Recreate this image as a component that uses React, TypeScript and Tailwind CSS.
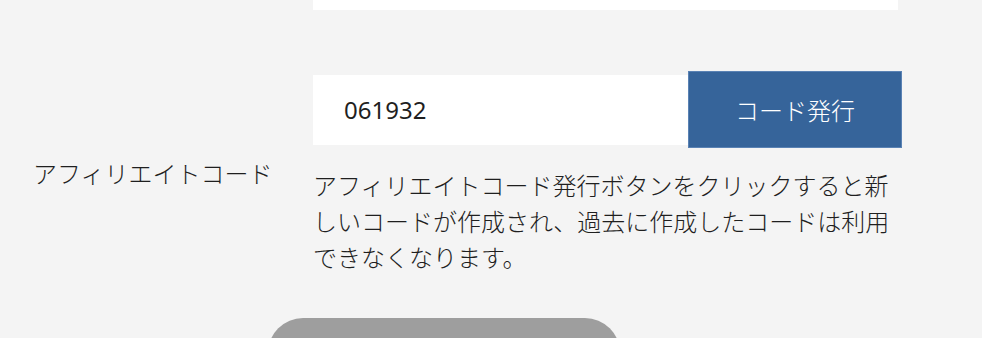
export default function App() {
  return (
    <div
      className="w-[982px] h-[338px] overflow-hidden bg-[#f4f4f4] text-[#1f1f1f] font-light"
      style={{ fontFamily: '"Noto Sans CJK JP", "Noto Sans", sans-serif' }}
    >
      {/* bottom of the previous field */}
      <div className="ml-[313px] w-[585px] h-[10px] bg-white" />

      {/* affiliate code row */}
      <div className="mt-[61px] flex items-center">
        <div className="w-[313px] pl-[33px] text-[24px] leading-[36px]">アフィリエイトコード</div>
        <div className="w-[589px]">
          <div className="flex items-center">
            <div
              className="w-[375px] h-[70px] bg-white flex items-center pl-[31px] text-[24px] font-normal"
              style={{ fontFamily: '"Noto Sans", sans-serif' }}
            >
              061932
            </div>
            <button className="w-[214px] h-[77px] bg-[#36649a] border border-[#5a82b4] text-white text-[24px] font-light">
              コード発行
            </button>
          </div>
          <p className="mt-[19px] w-[588px] text-[24px] leading-[36px]">
            アフィリエイトコード発行ボタンをクリックすると新しいコードが作成され、過去に作成したコードは利用できなくなります。
          </p>
        </div>
      </div>

      <div className="mt-[43px] ml-[268px] w-[352px] h-[70px] rounded-full bg-[#9e9e9e]" />
    </div>
  );
}
